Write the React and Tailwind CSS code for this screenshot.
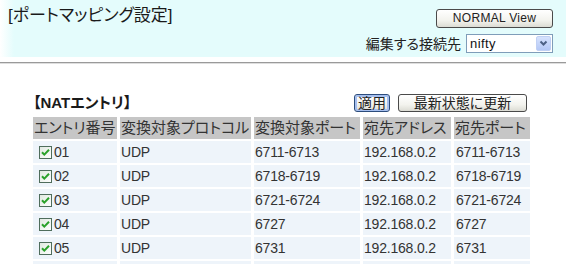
const rows = [
  ["01", "UDP", "6711-6713", "192.168.0.2", "6711-6713"],
  ["02", "UDP", "6718-6719", "192.168.0.2", "6718-6719"],
  ["03", "UDP", "6721-6724", "192.168.0.2", "6721-6724"],
  ["04", "UDP", "6727", "192.168.0.2", "6727"],
  ["05", "UDP", "6731", "192.168.0.2", "6731"],
];

function Check() {
  return (
    <svg width="13" height="13" viewBox="0 0 13 13" className="shrink-0">
      <defs>
        <linearGradient id="cbg" x1="0" y1="0" x2="1" y2="1">
          <stop offset="0" stopColor="#dfe8df" />
          <stop offset="1" stopColor="#ffffff" />
        </linearGradient>
      </defs>
      <rect x="0.5" y="0.5" width="12" height="12" fill="url(#cbg)" stroke="#4f6d5c" />
      <path d="M3 6.2 L5.3 8.6 L10 3.8" fill="none" stroke="#2aa12a" strokeWidth="2" />
    </svg>
  );
}

export default function App() {
  const grid = "grid grid-cols-[84px_131px_106px_88px_76px] gap-x-[3px]";
  return (
    <div className="w-[566px] h-[264px] overflow-hidden bg-white font-['Liberation_Sans','Noto_Sans_CJK_JP',sans-serif] text-[#222] [font-feature-settings:'palt']">
      <div className="h-[57px] bg-[linear-gradient(to_right,#ffffff,#e4fcfc_14px)] flex justify-between pl-[8px] pr-[13px]">
        <div className="pt-[6px] text-[17px] leading-[20px] text-[#1a1a1a]">[ポートマッピング設定]</div>
        <div className="flex flex-col items-end pt-[9px]">
          <button className="w-[117px] h-[19px] rounded-[3px] border border-[#4a4a4a] bg-[linear-gradient(#ffffff,#f3f3ee_60%,#dcdcd4)] text-[12px] leading-[17px] text-[#222] tracking-[0.3px]">
            NORMAL View
          </button>
          <div className="mt-[6px] flex items-center gap-[5px]">
            <span className="text-[14px] leading-[18px] text-[#222]">編集する接続先</span>
            <div className="w-[87px] h-[19px] border border-[#7f9db9] bg-white flex items-center justify-between pl-[3px] pr-[1px]">
              <span className="text-[13px] leading-[16px] text-[#111] tracking-[0.4px]">nifty</span>
              <div className="w-[15px] h-[15px] rounded-[2px] bg-[linear-gradient(#d6e2fd,#b4c8f6)] border border-[#c0d0f4] flex items-center justify-center">
                <svg width="9" height="7" viewBox="0 0 9 7">
                  <path d="M1.5 1.5 L4.5 4.5 L7.5 1.5" fill="none" stroke="#4d6185" strokeWidth="2" />
                </svg>
              </div>
            </div>
          </div>
        </div>
      </div>
      <div className="mt-[5px] h-[2px] border-t border-t-[#9a9a9a] border-b border-b-[#dedede]" />
      <div className="pt-[30px] pl-[33px]">
        <div className="w-[497px] flex items-center justify-between">
          <div className="text-[15px] font-bold leading-[18px] text-[#1a1a1a]">【NATエントリ】</div>
          <div className="flex gap-[8px] mr-[3px]">
            <button className="w-[36px] h-[18px] rounded-[3px] border border-[#2c4c7c] shadow-[inset_0_0_0_2px_#a6bfee] bg-[linear-gradient(#ffffff,#f1f1ec_60%,#dedcd2)] text-[14px] leading-[16px] text-[#222]">
              適用
            </button>
            <button className="w-[129px] h-[18px] rounded-[3px] border border-[#4a4a4a] bg-[linear-gradient(#ffffff,#f3f3ee_60%,#dcdcd4)] text-[14px] leading-[16px] text-[#222]">
              最新状態に更新
            </button>
          </div>
        </div>
        <div className="mt-[5px] flex flex-col gap-y-[2px]">
          <div className={grid + " h-[22px] text-[15px] leading-[22px] text-[#333]"}>
            {["エントリ番号", "変換対象プロトコル", "変換対象ポート", "宛先アドレス", "宛先ポート"].map((h, i) => (
              <div key={i} className="bg-[#c6c6c6] whitespace-nowrap overflow-hidden pl-[1px]">
                {h}
              </div>
            ))}
          </div>
          {rows.map((r) => (
            <div key={r[0]} className={grid + " h-[22px] text-[14px] leading-[22px] text-[#333] tracking-[-0.2px]"}>
              <div className="bg-[#eef4fa] flex items-center gap-[2px] pl-[6px]">
                <Check />
                <span>{r[0]}</span>
              </div>
              <div className="bg-[#eef4fa] pl-[1px]">{r[1]}</div>
              <div className="bg-[#eef4fa] pl-[1px]">{r[2]}</div>
              <div className="bg-[#eef4fa] pl-[1px]">{r[3]}</div>
              <div className="bg-[#eef4fa] pl-[2px]">{r[4]}</div>
            </div>
          ))}
          <div className={grid + " h-[22px]"}>
            <div className="bg-[#eef4fa]" />
            <div className="bg-[#eef4fa]" />
            <div className="bg-[#eef4fa]" />
            <div className="bg-[#eef4fa]" />
            <div className="bg-[#eef4fa]" />
          </div>
        </div>
      </div>
    </div>
  );
}
